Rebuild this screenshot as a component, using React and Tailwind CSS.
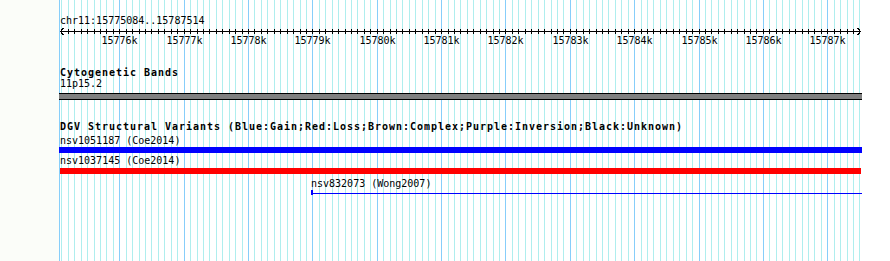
import React from 'react';

const START = 15775084;
const X0 = 1.34; // chart x of START, relative to the panel's left edge
const SCALE = 0.06436; // px per bp
const xAt = (bp) => Math.floor(X0 + (bp - START) * SCALE + 0.5);

const WIDTH = 803;
const hundreds = [];
for (let bp = 15775100; bp <= 15787500; bp += 100) hundreds.push(bp);
const thousands = hundreds.filter((bp) => bp % 1000 === 0);

const GridLines = () => (
  <svg className="absolute inset-0" width={WIDTH} height={261} shapeRendering="crispEdges">
    {hundreds.map((bp) => (
      <rect
        key={bp}
        x={xAt(bp)}
        y={0}
        width={1}
        height={261}
        fill={bp % 1000 === 0 ? '#87cefa' : '#afeeee'}
      />
    ))}
    <rect x={0} y={0} width={1} height={261} fill="#87cefa" />
  </svg>
);

const Ruler = () => (
  <svg width={WIDTH} height={20} shapeRendering="crispEdges" className="block">
    <rect x={1} y={4} width={801} height={1} fill="#000" />
    {hundreds.map((bp) => (
      <rect key={bp} x={xAt(bp)} y={2} width={1} height={5} fill="#000" />
    ))}
    <polyline points="4.5,1 1.5,4.5 4.5,8" fill="none" stroke="#000" strokeWidth={1} />
    <polyline points="798.5,1 801.5,4.5 798.5,8" fill="none" stroke="#000" strokeWidth={1} />
    {thousands.map((bp) => (
      <text
        key={bp}
        x={xAt(bp) + 0.5}
        y={17}
        textAnchor="middle"
        fontFamily="'DejaVu Sans Mono', monospace"
        fontSize={10}
        fill="#000"
      >
        {bp / 1000}k
      </text>
    ))}
  </svg>
);

const App = () => {
  return (
    <div className="flex w-[890px] h-[261px] bg-white overflow-hidden">
      <div className="w-[59px] shrink-0 bg-[#fbfdf9]" />
      <div className="relative w-[803px] shrink-0 h-full">
        <GridLines />
        <div className="relative text-black text-[10px] leading-[13px] font-['DejaVu_Sans_Mono',monospace]">
          {/* ruler */}
          <div className="pt-[14px]">
            <div className="h-[13px] pl-[1px]">chr11:15775084..15787514</div>
            <Ruler />
          </div>

          {/* cytobands */}
          <div className="mt-[19px] h-[11px] pl-[1px] font-bold tracking-[0.98px]">Cytogenetic Bands</div>
          <div className="h-[13px] pl-[1px]">11p15.2</div>
          <div className="mt-[3px] h-[7px] border-y border-black bg-[#808080]" />

          {/* DGV */}
          <div className="mt-[20px] h-[14px] pl-[1px] font-bold tracking-[0.98px]">
            DGV Structural Variants (Blue:Gain;Red:Loss;Brown:Complex;Purple:Inversion;Black:Unknown)
          </div>
          <div className="h-[13px] pl-[1px]">nsv1051187 (Coe2014)</div>
          <div className="h-[6px] bg-[#0000ff]" />
          <div className="mt-[1px] h-[13px] pl-[1px]">nsv1037145 (Coe2014)</div>
          <div className="mt-[1px] ml-[1px] w-[801px] h-[6px] bg-[#ff0000]" />
          <div className="mt-[3px] h-[13px] pl-[252px]">nsv832073 (Wong2007)</div>
          <div className="relative h-[6px] ml-[252px]">
            <div className="absolute left-0 top-0 w-[2px] h-[5px] bg-[#0000ff]" />
            <div className="absolute left-0 right-0 top-[3px] h-[1px] bg-[#0000ff]" />
          </div>
        </div>
      </div>
      <div className="flex-1 bg-white" />
    </div>
  );
};

export default App;
